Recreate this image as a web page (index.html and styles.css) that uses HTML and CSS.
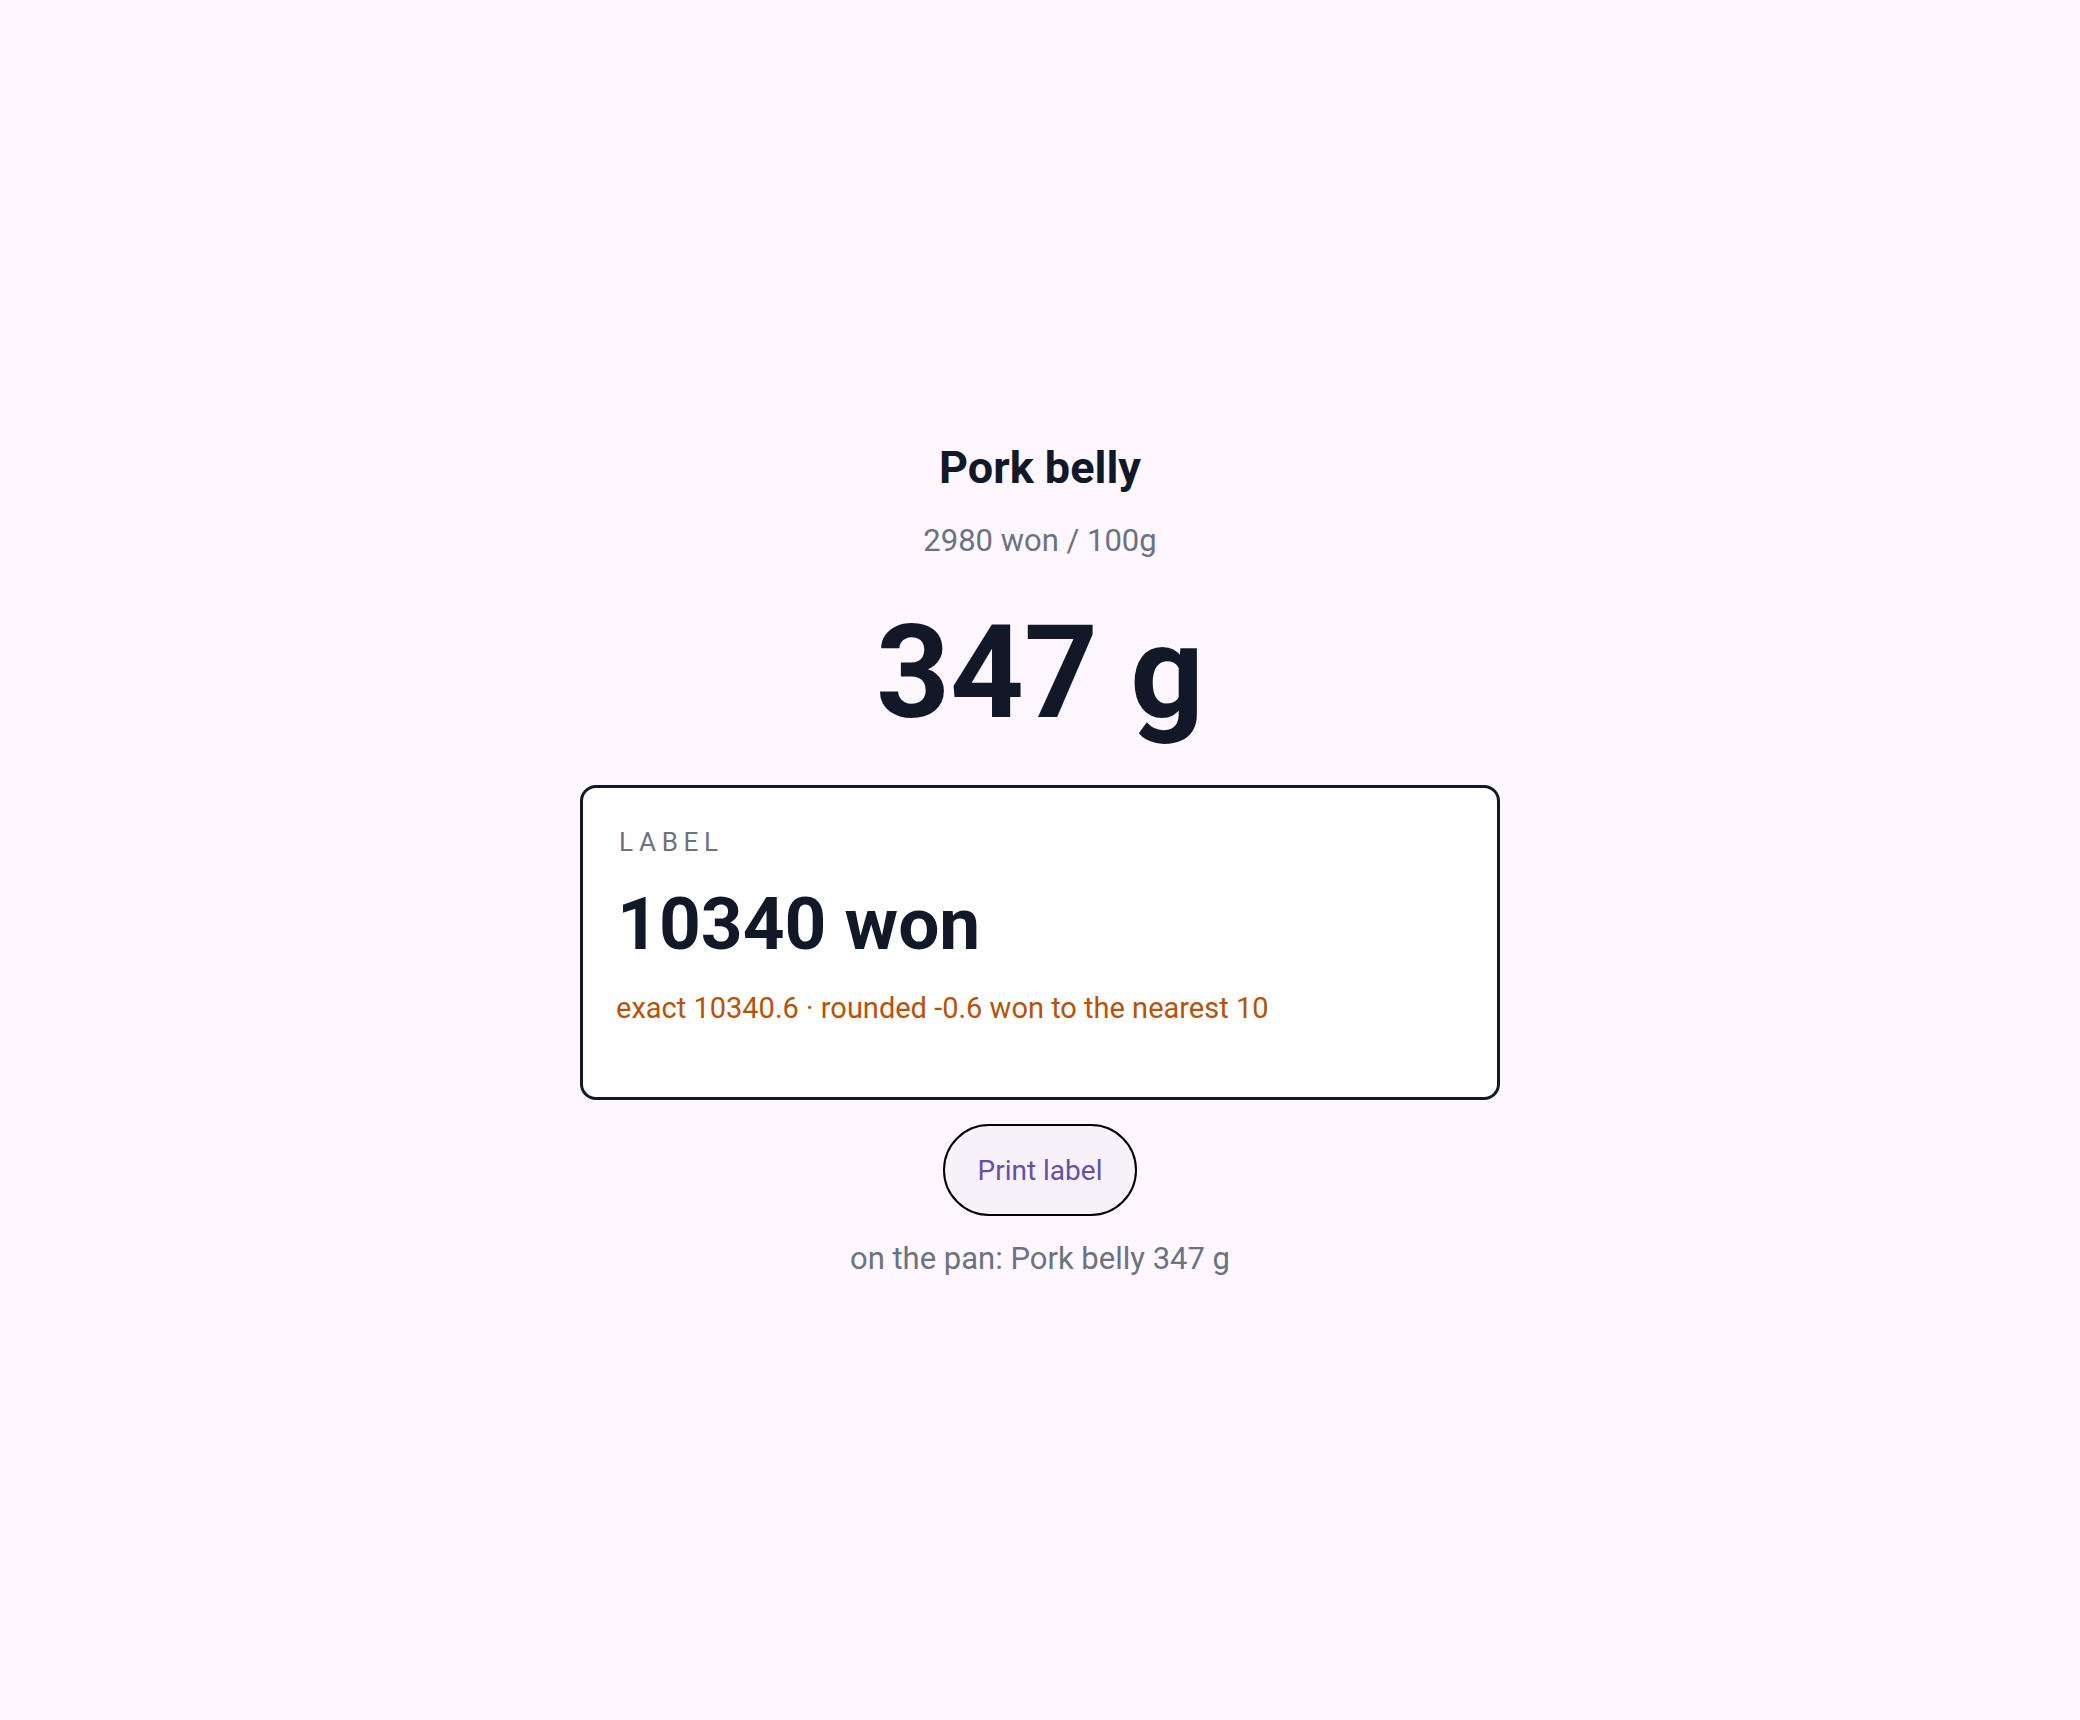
FILE: index.html
```html
<!DOCTYPE html>
<html lang="en">
<head>
<meta charset="utf-8">
<title>Scale</title>
<link rel="stylesheet" href="styles.css">
</head>
<body>
<main class="screen">
  <section class="scale">
    <h1 class="product">Pork belly</h1>
    <p class="unit-price">2980 won / 100g</p>
    <p class="weight">347 g</p>
    <div class="label-card">
      <p class="label-tag">LABEL</p>
      <p class="label-price">10340 won</p>
      <p class="label-note">exact 10340.6 · rounded -0.6 won to the nearest 10</p>
    </div>
    <button class="print-btn" type="button">Print label</button>
    <p class="pan">on the pan: Pork belly 347 g</p>
  </section>
</main>
</body>
</html>
```

FILE: styles.css
```css
* { box-sizing: border-box; }
html, body { margin: 0; padding: 0; }
body {
  background: #fef7ff;
  font-family: Roboto, "Noto Sans", "Liberation Sans", sans-serif;
  color: #111827;
}
.screen {
  min-height: 100vh;
  display: flex;
  align-items: center;
  justify-content: center;
}
.scale {
  display: flex;
  flex-direction: column;
  align-items: center;
  text-align: center;
}
.product {
  margin: 0;
  font-size: 45px;
  line-height: 52px;
  font-weight: 700;
}
.unit-price {
  margin: 28px 0 0;
  font-size: 31px;
  line-height: 38px;
  color: #6b7280;
}
.weight {
  margin: 38px 0 0;
  font-size: 129px;
  line-height: 150px;
  font-weight: 700;
}
.label-card {
  margin-top: 37px;
  width: 920px;
  min-height: 315px;
  background: #ffffff;
  border: 3px solid #111827;
  border-radius: 16px;
  padding: 39px 36px 36px 35px;
  text-align: left;
}
.label-tag {
  margin: 0 0 0 1px;
  font-size: 26px;
  line-height: 30px;
  letter-spacing: 0.22em;
  color: #6b7280;
}
.label-price {
  margin: 24px 0 0 -1px;
  font-size: 73px;
  line-height: 86px;
  font-weight: 700;
}
.label-note {
  margin: 23px 0 0 -2px;
  font-size: 29px;
  line-height: 37px;
  color: #b45309;
}
.print-btn {
  margin-top: 24px;
  height: 92px;
  padding: 0 33px;
  border: 2px solid #000000;
  border-radius: 999px;
  background: #f7f2fa;
  color: #6750a4;
  font-family: inherit;
  font-size: 28px;
}
.pan {
  margin: 23px 0 0;
  font-size: 31px;
  line-height: 39px;
  color: #6b7280;
}
```
